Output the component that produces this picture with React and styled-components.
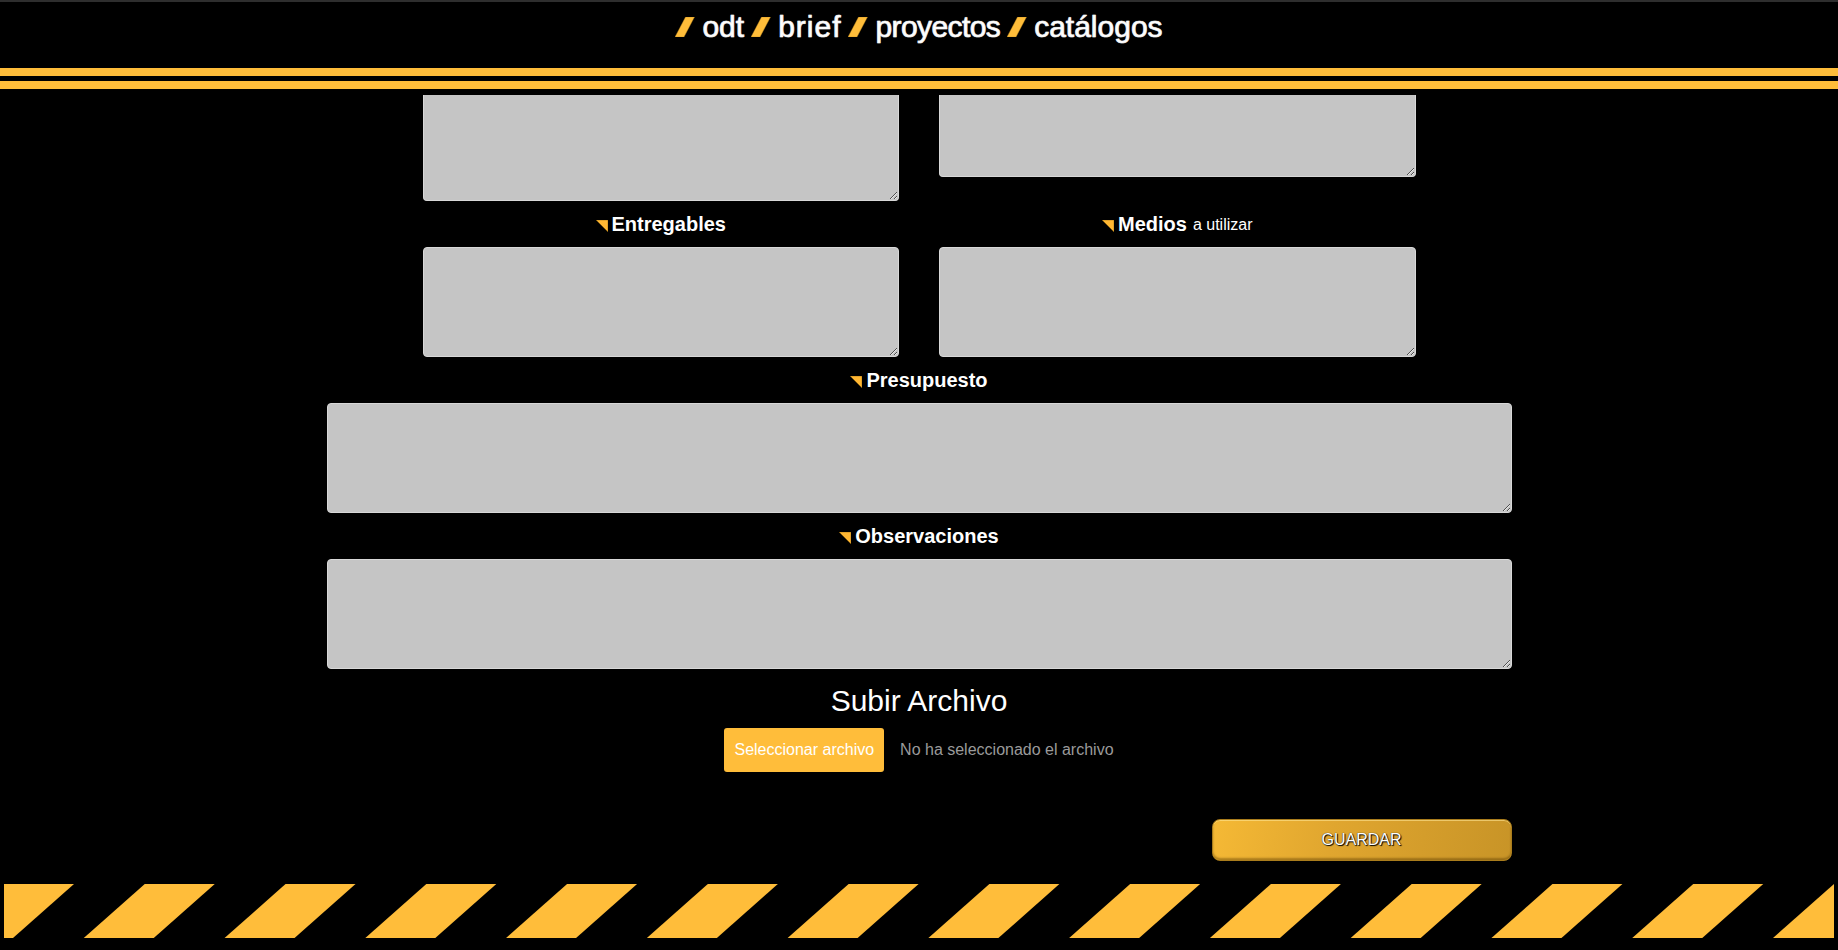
import React from "react";
import styled, { createGlobalStyle, css } from "styled-components";

const YELLOW = "#ffbd3a";

const GlobalStyle = createGlobalStyle`
  html, body { margin: 0; padding: 0; background: #000; }
  body { font-family: "Liberation Sans", Arial, Helvetica, sans-serif; color: #fff; }
  * { box-sizing: border-box; }
`;

const Page = styled.div`
  width: 100%;
  min-height: 950px;
  background: #000;
  display: flex;
  flex-direction: column;
`;

const Header = styled.header`
  border-top: 2px solid #2e2e2e;
  padding-top: 10px;
  padding-bottom: 6px;
  display: flex;
  flex-direction: column;
  align-items: center;
`;

const Logo = styled.div`
  display: flex;
  align-items: center;
  gap: 7px;
  height: 30px;
`;

const LogoItem = styled.div`
  display: flex;
  align-items: center;
  gap: 7px;
`;

const LogoWord = styled.span`
  font-size: 30px;
  line-height: 30px;
  color: #fff;
  letter-spacing: ${(p) => p.$ls || 0}px;
  -webkit-text-stroke: 0.6px #f4f4f4;
  text-shadow: 0 0 1px #777, 0 0 1px #777;
`;

const RuleBand = styled.div`
  width: 100%;
  margin-top: 26px;
  display: flex;
  flex-direction: column;
  gap: 5px;
`;

const Rule = styled.div`
  height: 8px;
  background: ${YELLOW};
`;

const Main = styled.main`
  width: 1185px;
  margin: 0 auto;
  display: flex;
  flex-direction: column;
`;

const TwoCol = styled.div`
  width: 993px;
  align-self: center;
  display: grid;
  grid-template-columns: 1fr 1fr;
  column-gap: 40px;
  align-items: start;
`;

const Field = styled.div`
  display: flex;
  flex-direction: column;
`;

const Label = styled.div`
  display: flex;
  justify-content: center;
  align-items: center;
  gap: 4px;
  margin: 12px 0;
  height: 22px;
  font-size: 20px;
  font-weight: 700;
  line-height: 22px;
  color: #fff;
`;

const LabelNote = styled.span`
  font-size: 16px;
  font-weight: 400;
  margin-left: 2px;
  margin-top: 2px;
`;

const Marker = styled.svg`
  width: 12px;
  height: 12px;
  margin-top: 4px;
  flex: none;
`;

const Area = styled.textarea`
  display: block;
  width: 100%;
  height: ${(p) => p.$h || 110}px;
  margin: 0;
  padding: 6px 10px;
  background: #c5c5c5;
  border: 1px solid #d8d8d8;
  border-radius: 4px;
  resize: vertical;
  font-family: inherit;
  font-size: 14px;
  color: #333;
  outline: none;
  ${(p) =>
    p.$cut &&
    css`
      border-top: none;
      border-top-left-radius: 0;
      border-top-right-radius: 0;
    `}
`;

const UploadTitle = styled.h3`
  margin: 15px 0 0;
  font-size: 30px;
  font-weight: 400;
  line-height: 33px;
  text-align: center;
  color: #fff;
`;

const UploadRow = styled.div`
  margin-top: 11px;
  display: flex;
  justify-content: center;
  align-items: center;
  gap: 16px;
`;

const FileButton = styled.label`
  height: 44px;
  padding: 0 10px;
  display: flex;
  align-items: center;
  background: ${YELLOW};
  border-radius: 3px;
  color: #fff;
  font-size: 16px;
  cursor: pointer;
  input { display: none; }
`;

const NoFile = styled.span`
  color: #9a9a9a;
  font-size: 16px;
`;

const Actions = styled.div`
  margin-top: 47px;
  display: flex;
  justify-content: flex-end;
`;

const SaveButton = styled.button`
  width: 300px;
  height: 42px;
  border: 1px solid #a97c1c;
  border-radius: 8px;
  background: linear-gradient(100deg, #f5b935 0%, #e0a62f 40%, #c89427 100%);
  box-shadow: inset 0 1px 0 rgba(255, 230, 150, 0.6), inset 0 -2px 2px rgba(90, 60, 0, 0.45),
    0 1px 2px rgba(0, 0, 0, 0.6);
  color: #fff;
  font-family: inherit;
  font-size: 16px;
  text-shadow: 1px 1px 1px #000, 0 0 1px #000;
  cursor: pointer;
`;

const FooterBand = styled.div`
  margin: 23px 4px 0;
  height: 54px;
  svg { display: block; width: 100%; height: 54px; }
`;

const Slash = () => (
  <svg width="20" height="20" viewBox="0 0 20 20">
    <polygon points="10.5,0 19.5,0 9,20 0,20" fill={YELLOW} stroke="#b07d18" strokeWidth="0.4" />
  </svg>
);

const LabelMark = () => (
  <Marker viewBox="0 0 12 12">
    <polygon points="0,0 12,0 12,12" fill="#ffb733" stroke="#6b4a00" strokeWidth="0.4" />
  </Marker>
);

const P = 1830 / 13;
const footerStripes = Array.from({ length: 14 }, (_, k) => {
  const x = k * P;
  return `${x},0 ${x + 70},0 ${x + 9},54 ${x - 61},54`;
});

const logoWords = [
  { w: "odt" },
  { w: "brief", ls: 1 },
  { w: "proyectos", ls: -0.6 },
  { w: "catálogos" },
];

export default function App() {
  return (
    <Page>
      <GlobalStyle />
      <Header>
        <Logo>
          {logoWords.map((it) => (
            <LogoItem key={it.w}>
              <Slash />
              <LogoWord $ls={it.ls}>{it.w}</LogoWord>
            </LogoItem>
          ))}
        </Logo>
        <RuleBand>
          <Rule />
          <Rule />
        </RuleBand>
      </Header>

      <Main>
        <TwoCol>
          <Area $cut $h={106} />
          <Area $cut $h={82} />
        </TwoCol>

        <TwoCol>
          <Field>
            <Label>
              <LabelMark />
              Entregables
            </Label>
            <Area />
          </Field>
          <Field>
            <Label>
              <LabelMark />
              Medios
              <LabelNote>a utilizar</LabelNote>
            </Label>
            <Area />
          </Field>
        </TwoCol>

        <Field>
          <Label>
            <LabelMark />
            Presupuesto
          </Label>
          <Area />
        </Field>

        <Field>
          <Label>
            <LabelMark />
            Observaciones
          </Label>
          <Area />
        </Field>

        <UploadTitle>Subir Archivo</UploadTitle>
        <UploadRow>
          <FileButton>
            <input type="file" />
            Seleccionar archivo
          </FileButton>
          <NoFile>No ha seleccionado el archivo</NoFile>
        </UploadRow>

        <Actions>
          <SaveButton type="button">GUARDAR</SaveButton>
        </Actions>
      </Main>

      <FooterBand>
        <svg viewBox="0 0 1830 54" preserveAspectRatio="none">
          {footerStripes.map((pts, i) => (
            <polygon key={i} points={pts} fill={YELLOW} />
          ))}
        </svg>
      </FooterBand>
    </Page>
  );
}
